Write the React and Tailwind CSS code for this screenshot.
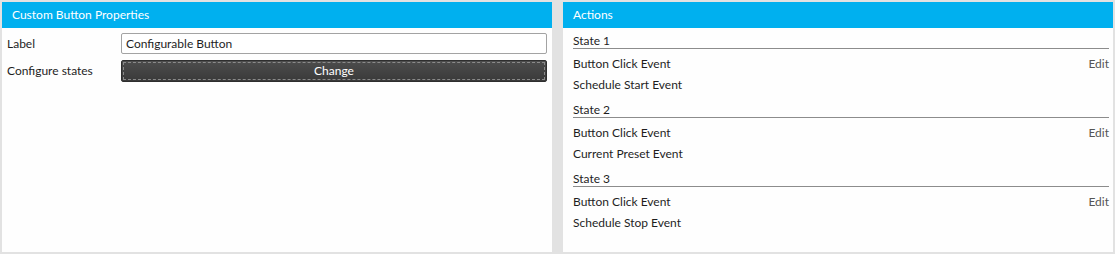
const groups = [
  { title: 'State 1', events: ['Button Click Event', 'Schedule Start Event'] },
  { title: 'State 2', events: ['Button Click Event', 'Current Preset Event'] },
  { title: 'State 3', events: ['Button Click Event', 'Schedule Stop Event'] },
];

function PanelHeader({ children }) {
  return (
    <div className="flex h-[26px] items-center bg-[#00b0ef] px-[10px] text-[12px] text-white">
      {children}
    </div>
  );
}

export default function App() {
  return (
    <div
      className="flex h-[254px] w-[1115px] gap-[11px] bg-[#e2e2e2] p-[2px] text-[12px] text-[#1e1e1e]"
      style={{ fontFamily: 'Lato, "Open Sans", sans-serif' }}
    >
      <div className="flex w-[550px] flex-col bg-[#fefefe]">
        <PanelHeader>Custom Button Properties</PanelHeader>
        <div className="flex flex-col gap-[6px] px-[5px] pt-[5px]">
          <div className="flex items-center">
            <span className="w-[114px]">Label</span>
            <div className="flex h-[21px] flex-1 items-center rounded-[2px] border border-[#a3a3a3] bg-white px-[4px]">
              Configurable Button
            </div>
          </div>
          <div className="flex items-center">
            <span className="w-[114px]">Configure states</span>
            <button className="h-[22px] flex-1 rounded-[2px] border border-[#2e2e2e] bg-gradient-to-b from-[#4d4d4d] to-[#3a3a3a] p-[1px] text-white">
              <span className="flex h-full items-center justify-center border border-dashed border-[#8a8a8a]">
                Change
              </span>
            </button>
          </div>
        </div>
      </div>

      <div className="flex w-[550px] flex-col bg-[#fefefe]">
        <PanelHeader>Actions</PanelHeader>
        <div className="flex flex-col gap-[8px] pl-[10px] pr-[4px] pt-[6px]">
          {groups.map((g) => (
            <div key={g.title} className="flex flex-col">
              <div className="flex h-[15px] items-center border-b border-[#8c8c8c] pb-[1px]">{g.title}</div>
              <div className="pt-[4px]">
                {g.events.map((e, i) => (
                  <div key={e} className="flex h-[21px] items-center justify-between">
                    <span>{e}</span>
                    {i === 0 ? <span className="text-[#555]">Edit</span> : null}
                  </div>
                ))}
              </div>
            </div>
          ))}
        </div>
      </div>
    </div>
  );
}
